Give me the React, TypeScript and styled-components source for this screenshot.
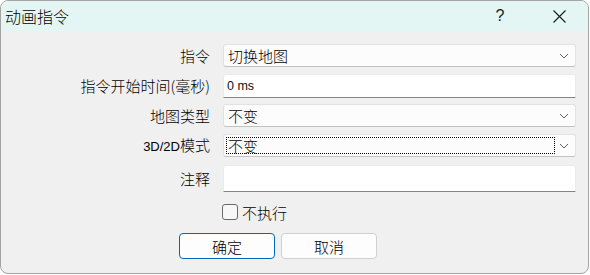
import React from "react";
import styled, { createGlobalStyle } from "styled-components";

const Global = createGlobalStyle`
  html, body { margin: 0; padding: 0; background: #ffffff; }
  body { font-family: "Noto Sans CJK SC", "Noto Sans", sans-serif; color: #000; font-weight: 300; }
  * { box-sizing: border-box; }
`;

const Window = styled.div`
  width: 589px;
  height: 274px;
  border: 1px solid #a3a3a3;
  border-radius: 8px;
  overflow: hidden;
  background: #f0f0f0;
  display: flex;
  flex-direction: column;
`;

const TitleBar = styled.div`
  height: 30px;
  flex: none;
  background: #e3f6f3;
  display: flex;
  align-items: center;
  padding-left: 4px;
`;

const Title = styled.div`
  font-size: 16px;
  line-height: 30px;
  flex: 1;
`;

const CaptionButton = styled.div<{ $mr?: number }>`
  width: 46px;
  height: 30px;
  display: flex;
  align-items: center;
  justify-content: center;
  margin-right: ${(p) => p.$mr ?? 0}px;
  font-family: "Liberation Sans", sans-serif;
  font-size: 16px;
  color: #1a1a1a;
`;

const Body = styled.div`
  padding-top: 13px;
  display: flex;
  flex-direction: column;
`;

const Row = styled.div<{ $mt: number; $h: number }>`
  display: flex;
  align-items: center;
  height: ${(p) => p.$h}px;
  margin-top: ${(p) => p.$mt}px;
`;

const Label = styled.div`
  width: 209px;
  margin-right: 13px;
  text-align: right;
  font-size: 15px;
  line-height: 20px;
  white-space: nowrap;
`;

const Latin = styled.span`
  font-family: "Liberation Sans", sans-serif;
  font-size: 13px;
  font-weight: 400;
`;

const Select = styled.div`
  position: relative;
  width: 353px;
  height: 100%;
  background: #fcfcfc;
  border: 1px solid #e2e2e2;
  border-bottom-color: #c2c2c2;
  border-radius: 3px;
  display: flex;
  align-items: center;
  padding-left: 3px;
  font-size: 15px;
`;

const FocusText = styled.div<{ $focused?: boolean }>`
  flex: none;
  width: 329px;
  height: 17px;
  display: flex;
  align-items: center;
  padding-left: 1px;
  margin-left: -1px;
  border: 1px dotted ${(p) => (p.$focused ? "#000" : "transparent")};
  line-height: 15px;
`;

const Chevron = styled.svg`
  position: absolute;
  right: 6px;
  top: 50%;
  margin-top: -3px;
`;

const TextInput = styled.div`
  width: 353px;
  height: 100%;
  background: #ffffff;
  border: 1px solid #ebebeb;
  border-bottom-color: #858585;
  border-radius: 3px 3px 0 0;
  display: flex;
  align-items: center;
  padding-left: 3px;
  font-family: "Liberation Sans", sans-serif;
  font-weight: 400;
  font-size: 12.5px;
  color: #111;
`;

const CheckRow = styled.div`
  display: flex;
  align-items: center;
  height: 16px;
  margin-top: 12px;
  padding-left: 221px;
  font-size: 15px;
`;

const Box = styled.div`
  width: 16px;
  height: 16px;
  border: 1px solid #6a6a6a;
  border-radius: 3px;
  background: #f7f7f7;
  margin-right: 4px;
`;

const ButtonRow = styled.div`
  display: flex;
  gap: 6px;
  margin-top: 13px;
  padding-left: 178px;
`;

const Button = styled.div<{ $primary?: boolean }>`
  width: 96px;
  height: 26px;
  border-radius: 4px;
  background: #fdfdfd;
  border: 1px solid ${(p) => (p.$primary ? "#0067c0" : "#d0d0d0")};
  display: flex;
  align-items: center;
  justify-content: center;
  font-size: 15px;
`;

const ChevronIcon = () => (
  <Chevron width="10" height="6" viewBox="0 0 10 6">
    <path d="M1 1 L5 5 L9 1" fill="none" stroke="#5f5f5f" strokeWidth="1" />
  </Chevron>
);

export default function App() {
  return (
    <>
      <Global />
      <Window>
        <TitleBar>
          <Title>动画指令</Title>
          <CaptionButton $mr={13}>?</CaptionButton>
          <CaptionButton $mr={6}>
            <svg width="13" height="13" viewBox="0 0 13 13">
              <path d="M0.5 0.5 L12.5 12.5 M12.5 0.5 L0.5 12.5" stroke="#1a1a1a" strokeWidth="1.1" />
            </svg>
          </CaptionButton>
        </TitleBar>
        <Body>
          <Row $mt={0} $h={23}>
            <Label>指令</Label>
            <Select>
              <FocusText>切换地图</FocusText>
              <ChevronIcon />
            </Select>
          </Row>
          <Row $mt={7} $h={24}>
            <Label>指令开始时间(毫秒)</Label>
            <TextInput>0 ms</TextInput>
          </Row>
          <Row $mt={6} $h={23}>
            <Label>地图类型</Label>
            <Select>
              <FocusText>不变</FocusText>
              <ChevronIcon />
            </Select>
          </Row>
          <Row $mt={7} $h={23}>
            <Label>
              <Latin>3D/2D</Latin>模式
            </Label>
            <Select>
              <FocusText $focused>不变</FocusText>
              <ChevronIcon />
            </Select>
          </Row>
          <Row $mt={8} $h={27}>
            <Label>注释</Label>
            <TextInput />
          </Row>
          <CheckRow>
            <Box />
            不执行
          </CheckRow>
          <ButtonRow>
            <Button $primary>确定</Button>
            <Button>取消</Button>
          </ButtonRow>
        </Body>
      </Window>
    </>
  );
}
